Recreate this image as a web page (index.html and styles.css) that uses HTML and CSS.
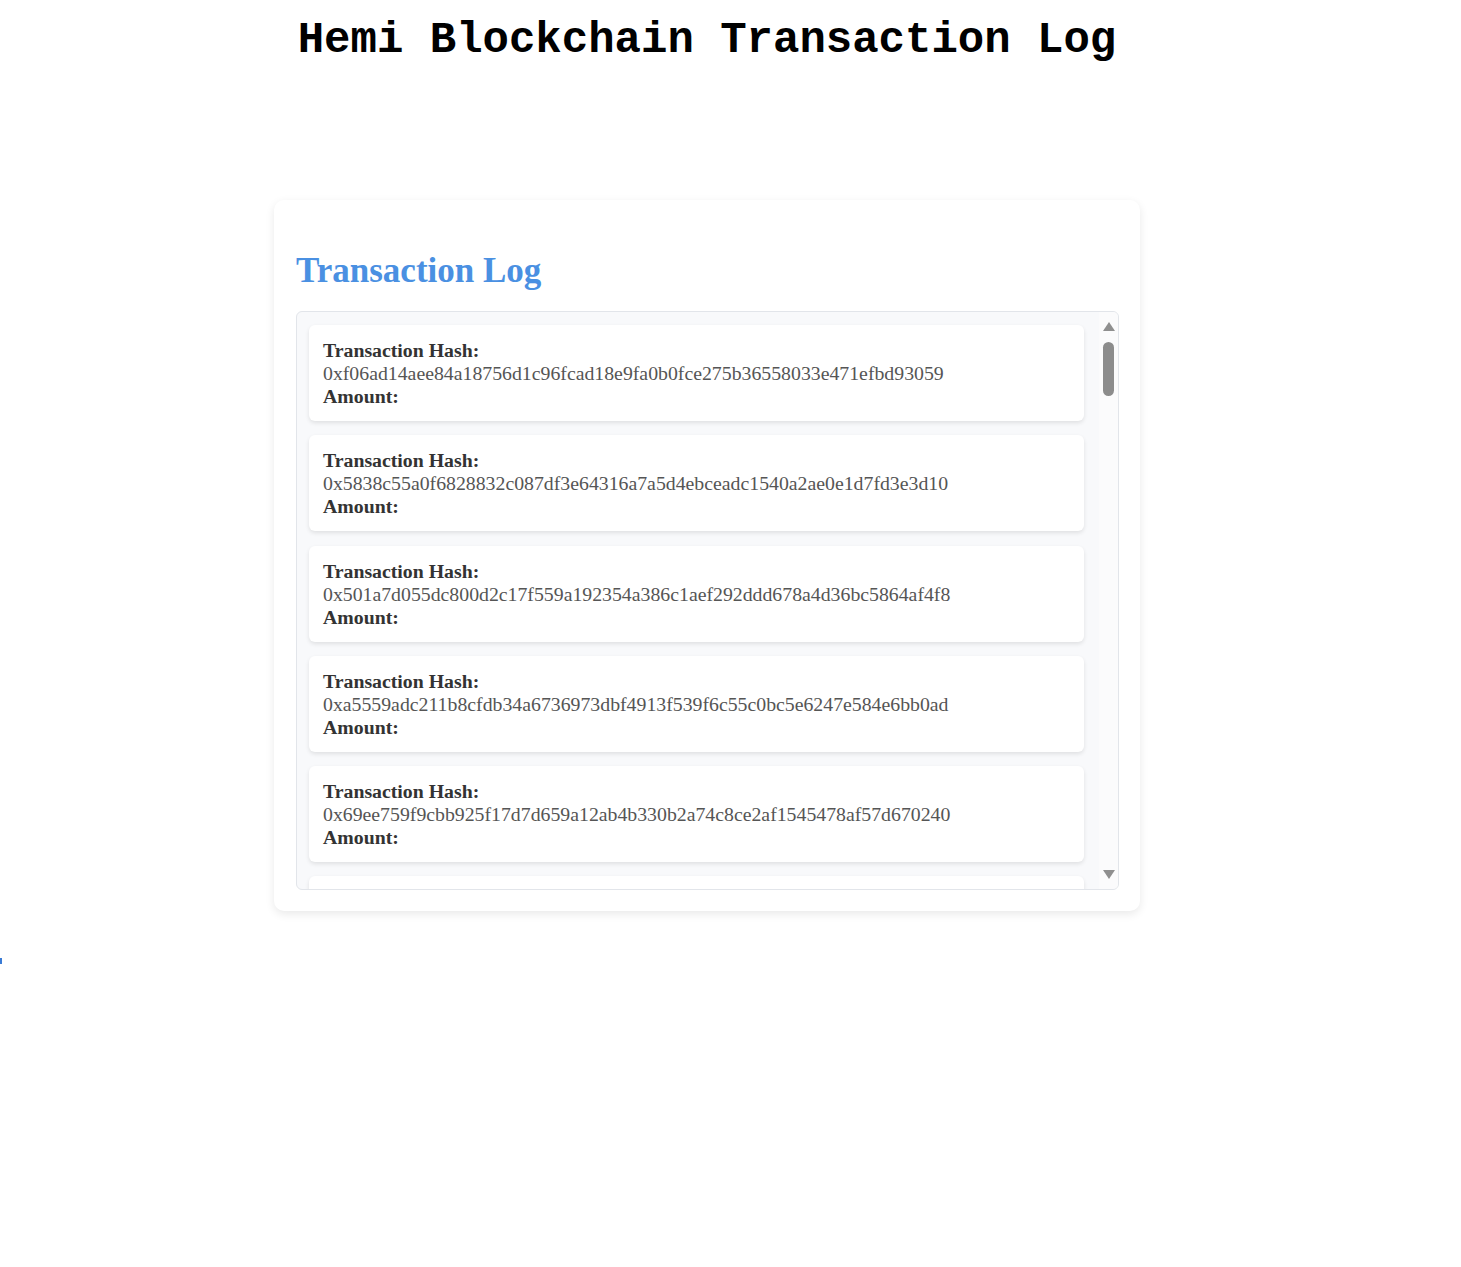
FILE: index.html
```html
<!DOCTYPE html>
<html lang="en">
<head>
<meta charset="utf-8">
<title>Hemi Blockchain Transaction Log</title>
<link rel="stylesheet" href="styles.css">
</head>
<body>
<div class="wrap">
  <h1 class="title">Hemi Blockchain Transaction Log</h1>
  <section class="card">
    <h2 class="card-title">Transaction Log</h2>
    <div class="list">
      <div class="items">
        <div class="tx"><b>Transaction Hash:</b><br>0xf06ad14aee84a18756d1c96fcad18e9fa0b0fce275b36558033e471efbd93059<br><b>Amount:</b></div>
        <div class="tx"><b>Transaction Hash:</b><br>0x5838c55a0f6828832c087df3e64316a7a5d4ebceadc1540a2ae0e1d7fd3e3d10<br><b>Amount:</b></div>
        <div class="tx"><b>Transaction Hash:</b><br>0x501a7d055dc800d2c17f559a192354a386c1aef292ddd678a4d36bc5864af4f8<br><b>Amount:</b></div>
        <div class="tx"><b>Transaction Hash:</b><br>0xa5559adc211b8cfdb34a6736973dbf4913f539f6c55c0bc5e6247e584e6bb0ad<br><b>Amount:</b></div>
        <div class="tx"><b>Transaction Hash:</b><br>0x69ee759f9cbb925f17d7d659a12ab4b330b2a74c8ce2af1545478af57d670240<br><b>Amount:</b></div>
        <div class="tx"><b>Transaction Hash:</b><br>0x3b7e1c0d94a2f5e86c3d1b70a9e4f28d5c6b3a1e07f9d24c8b5a6e3f1d0c9b72<br><b>Amount:</b></div>
      </div>
      <div class="scrollbar" aria-hidden="true">
        <span class="arrow arrow-up"></span>
        <div class="track"><span class="thumb"></span></div>
        <span class="arrow arrow-down"></span>
      </div>
    </div>
  </section>
</div>
<div class="edge-mark"></div>
</body>
</html>
```

FILE: styles.css
```css
html, body {
  margin: 0;
  padding: 0;
  background: #ffffff;
}

body {
  font-family: "Liberation Serif", "Times New Roman", serif;
  color: #333333;
}

.wrap {
  width: 866px;
  margin-left: 274px;
}

.title {
  margin: 0;
  padding-top: 15px;
  text-align: center;
  font-family: "Liberation Mono", "Courier New", monospace;
  font-weight: bold;
  font-size: 44px;
  line-height: 50px;
  color: #000000;
}

.card {
  margin-top: 135px;
  background: #ffffff;
  border-radius: 10px;
  box-shadow: 0 3px 10px rgba(0, 0, 0, 0.09);
  padding: 21px 21px 21px 22px;
}

.card-title {
  margin: 30px 0 21px;
  font-family: "Liberation Serif", "Times New Roman", serif;
  font-weight: bold;
  font-size: 35px;
  line-height: 39px;
  color: #4a90e2;
}

.list {
  box-sizing: border-box;
  height: 579px;
  display: flex;
  background: #f8f9fb;
  border: 1px solid #e2e5ea;
  border-radius: 6px;
  overflow: hidden;
}

.items {
  flex: 1;
  min-width: 0;
  overflow: hidden;
  padding: 13px 15px 0 12px;
  display: flex;
  flex-direction: column;
  gap: 14.25px;
}

.tx {
  flex: none;
  background: #ffffff;
  border-radius: 6px;
  box-shadow: 0 2px 4px rgba(0, 0, 0, 0.1);
  padding: 14px 14px 13px;
  font-size: 19.8px;
  line-height: 23px;
  color: #555555;
}

.tx b {
  color: #333333;
}

.scrollbar {
  flex: none;
  width: 19px;
  display: flex;
  flex-direction: column;
  align-items: center;
  background: #fbfbfc;
  padding: 10px 0 10px;
}

.arrow {
  width: 0;
  height: 0;
  border-left: 6.5px solid transparent;
  border-right: 6.5px solid transparent;
}

.arrow-up {
  border-bottom: 9px solid #8f8f8f;
}

.arrow-down {
  border-top: 9px solid #8f8f8f;
}

.track {
  flex: 1;
  align-self: stretch;
  display: flex;
  justify-content: center;
  padding-top: 11px;
}

.thumb {
  width: 11px;
  height: 54px;
  border-radius: 6px;
  background: #8c8c8c;
}

.edge-mark {
  width: 2px;
  height: 6px;
  margin-top: 47px;
  background: #3a7bd5;
}
```
